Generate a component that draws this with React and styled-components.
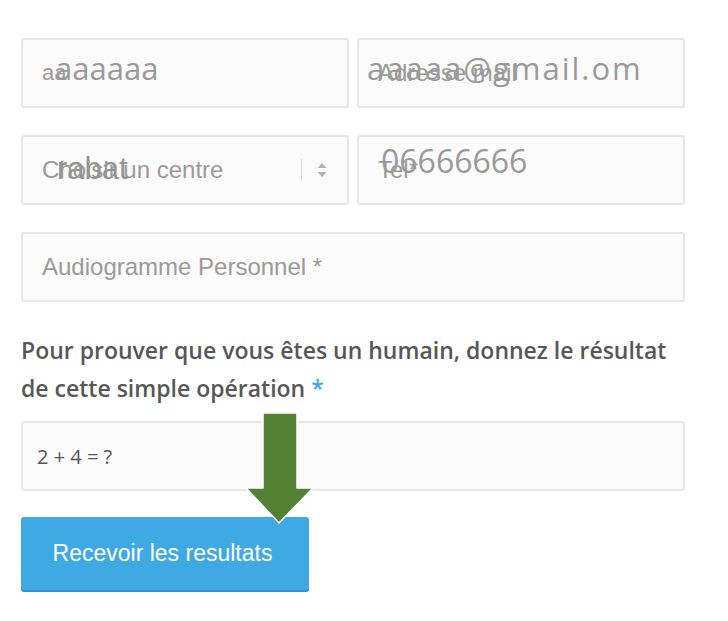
import React from "react";
import styled, { createGlobalStyle } from "styled-components";

const GlobalStyle = createGlobalStyle`
  body {
    margin: 0;
    background: #ffffff;
  }
`;

const Page = styled.div`
  position: relative;
  width: 728px;
  height: 621px;
  box-sizing: border-box;
  padding: 38px 43px 0 21px;
  display: flex;
  flex-direction: column;
`;

const Row = styled.div`
  display: grid;
  grid-template-columns: 328px 328px;
  gap: 8px;
  margin-bottom: 27px;
`;

const Field = styled.div`
  position: relative;
  height: 70px;
  box-sizing: border-box;
  border: 2px solid #e6e6e6;
  border-radius: 3px;
  background: #fbfbfb;
  display: flex;
  align-items: center;
  padding: 0 ${p => p.$pad || 19}px;
  overflow: hidden;
`;

const Placeholder = styled.span`
  font-family: "Liberation Sans", Arial, sans-serif;
  font-size: ${p => p.$size || 24}px;
  color: #9c9a98;
  white-space: nowrap;
`;

// text typed on top of the placeholder (screenshot shows both at once)
const Typed = styled.span`
  position: absolute;
  left: ${p => p.$left}px;
  top: ${p => p.$top}px;
  font-family: ${p => (p.$arial ? '"Liberation Sans", Arial' : '"Open Sans"')}, sans-serif;
  font-size: ${p => p.$size || 31}px;
  line-height: 1;
  letter-spacing: ${p => p.$spacing || 0}px;
  color: ${p => p.$color || "#9a9a9a"};
  white-space: nowrap;
`;

const SelectControls = styled.div`
  margin-left: auto;
  display: flex;
  align-items: center;
  gap: 15px;
  margin-right: 1px;
`;

const Divider = styled.div`
  width: 1px;
  height: 22px;
  background: #dcdcdc;
`;

const Label = styled.p`
  margin: 29px 0 14px;
  font-family: "Open Sans", sans-serif;
  font-weight: 600;
  font-size: 23px;
  line-height: 38px;
  color: #575757;
`;

const Required = styled.span`
  color: #3fa9e3;
`;

const Captcha = styled.span`
  font-family: "Open Sans", sans-serif;
  font-size: 20px;
  color: #555555;
`;

const SubmitButton = styled.button`
  margin-top: 26px;
  width: 288px;
  height: 75px;
  border: none;
  border-bottom: 2px solid #2f90cc;
  border-radius: 3px;
  background: #3fa9e3;
  color: #ffffff;
  font-family: "Liberation Sans", Arial, sans-serif;
  font-size: 23px;
  padding: 0 5px 0 0;
  cursor: pointer;
`;

const Arrow = styled.svg`
  position: absolute;
  left: 244px;
  top: 411px;
`;

const SortIcon = () => (
  <svg width="10" height="16" viewBox="0 0 10 16">
    <polygon points="5,1 9.5,6 0.5,6" fill="#b4b4b4" />
    <polygon points="0.5,10 9.5,10 5,15" fill="#b4b4b4" />
  </svg>
);

export default function App() {
  return (
    <>
      <GlobalStyle />
      <Page>
        <Row>
          <Field>
            <Placeholder $size={22}>aa</Placeholder>
            <Typed $left={32} $top={13}>aaaaaa</Typed>
          </Field>
          <Field>
            <Placeholder>Adresse mail</Placeholder>
            <Typed $left={8} $top={13} $spacing={2}>aaaaa@gmail.om</Typed>
          </Field>
        </Row>
        <Row>
          <Field>
            <Placeholder>Choisir un centre</Placeholder>
            <Typed $left={34} $top={16} $arial $size={31} $color="#939393">rabat</Typed>
            <SelectControls>
              <Divider />
              <SortIcon />
            </SelectControls>
          </Field>
          <Field>
            <Placeholder>Tel*</Placeholder>
            <Typed $left={22} $top={8} $size={32}>06666666</Typed>
          </Field>
        </Row>
        <Field>
          <Placeholder>Audiogramme Personnel *</Placeholder>
        </Field>
        <Label>
          Pour prouver que vous êtes un humain, donnez le résultat
          <br />
          de cette simple opération <Required>*</Required>
        </Label>
        <Field $pad={14}>
          <Captcha>2 + 4 = ?</Captcha>
        </Field>
        <div>
          <SubmitButton type="button">Recevoir les resultats</SubmitButton>
        </div>
        <Arrow width="72" height="116" viewBox="0 0 72 116">
          <polygon
            points="19,2 53,2 53,77 69,77 35,112 2,77 19,77"
            fill="#548235"
            stroke="#ffffff"
            strokeWidth="1.5"
          />
        </Arrow>
      </Page>
    </>
  );
}
